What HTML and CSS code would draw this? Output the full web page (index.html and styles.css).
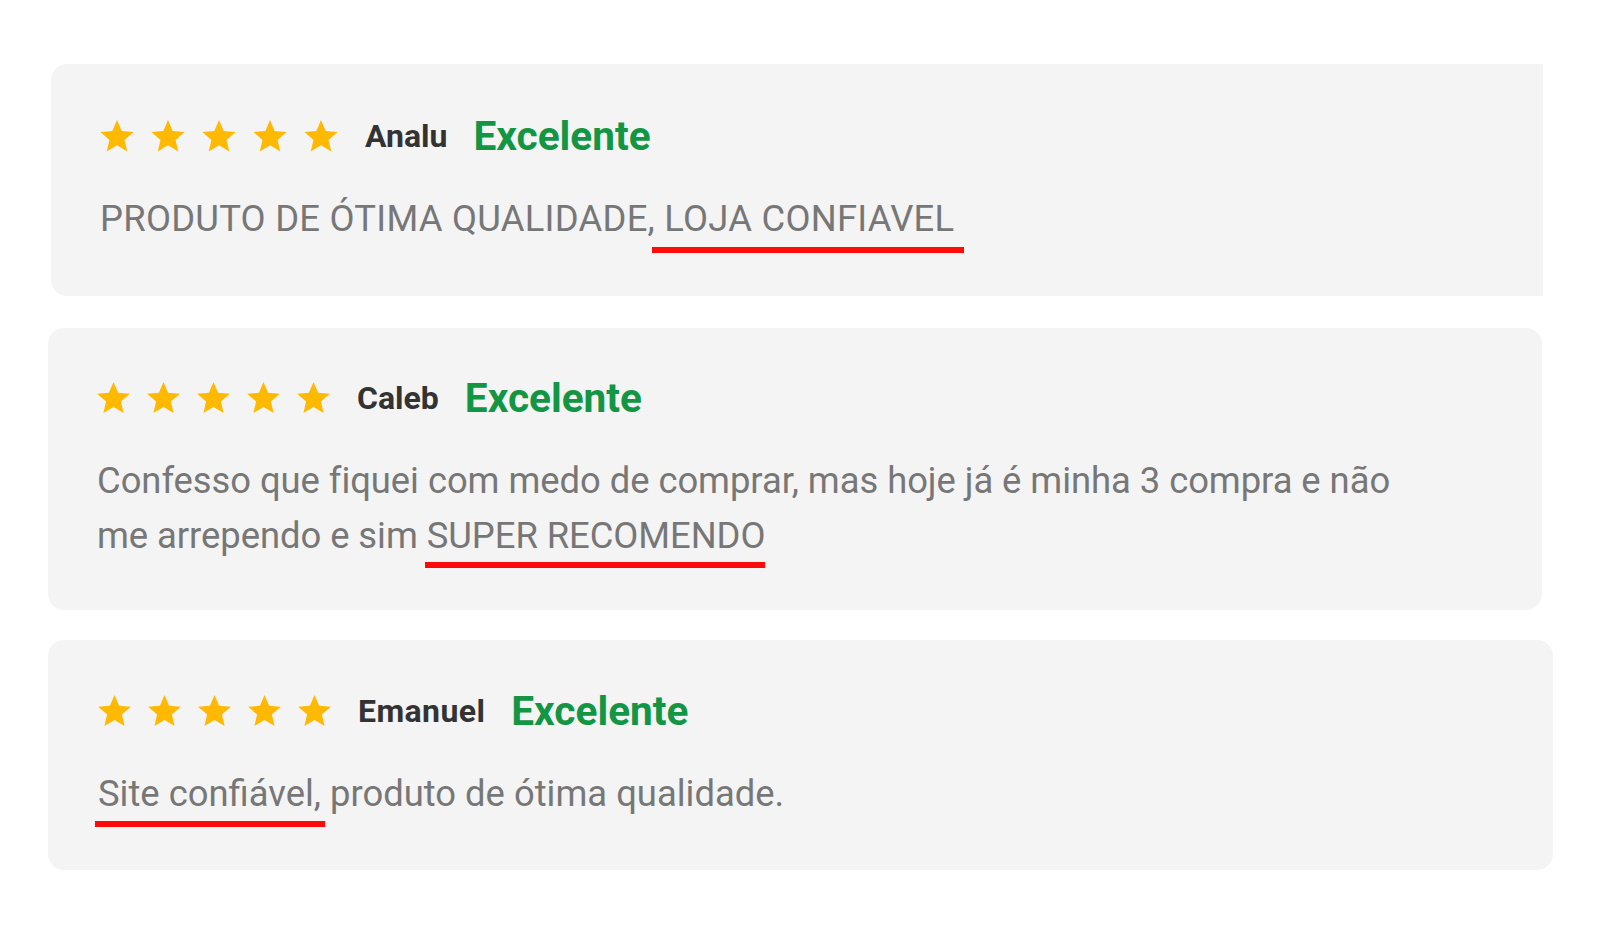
FILE: index.html
```html
<!DOCTYPE html>
<html lang="pt-BR">
<head>
<meta charset="utf-8">
<title>Avaliações</title>
<link rel="stylesheet" href="styles.css">
</head>
<body>
<main class="reviews">
  <article class="card card--one">
    <div class="card-head">
      <div class="stars">
        <svg class="star" viewBox="2 2 20 19.27"><path d="M12 17.27L18.18 21l-1.64-7.03L22 9.24l-7.19-.61L12 2 9.19 8.63 2 9.24l5.46 4.73L5.82 21z"/></svg>
        <svg class="star" viewBox="2 2 20 19.27"><path d="M12 17.27L18.18 21l-1.64-7.03L22 9.24l-7.19-.61L12 2 9.19 8.63 2 9.24l5.46 4.73L5.82 21z"/></svg>
        <svg class="star" viewBox="2 2 20 19.27"><path d="M12 17.27L18.18 21l-1.64-7.03L22 9.24l-7.19-.61L12 2 9.19 8.63 2 9.24l5.46 4.73L5.82 21z"/></svg>
        <svg class="star" viewBox="2 2 20 19.27"><path d="M12 17.27L18.18 21l-1.64-7.03L22 9.24l-7.19-.61L12 2 9.19 8.63 2 9.24l5.46 4.73L5.82 21z"/></svg>
        <svg class="star" viewBox="2 2 20 19.27"><path d="M12 17.27L18.18 21l-1.64-7.03L22 9.24l-7.19-.61L12 2 9.19 8.63 2 9.24l5.46 4.73L5.82 21z"/></svg>
      </div>
      <span class="name">Analu</span>
      <span class="rating">Excelente</span>
    </div>
    <p class="text text--caps">PRODUTO DE ÓTIMA QUALIDADE,<span class="mark mark--one"> LOJA CONFIAVEL</span></p>
  </article>

  <article class="card card--two">
    <div class="card-head">
      <div class="stars stars--sm">
        <svg class="star" viewBox="2 2 20 19.27"><path d="M12 17.27L18.18 21l-1.64-7.03L22 9.24l-7.19-.61L12 2 9.19 8.63 2 9.24l5.46 4.73L5.82 21z"/></svg>
        <svg class="star" viewBox="2 2 20 19.27"><path d="M12 17.27L18.18 21l-1.64-7.03L22 9.24l-7.19-.61L12 2 9.19 8.63 2 9.24l5.46 4.73L5.82 21z"/></svg>
        <svg class="star" viewBox="2 2 20 19.27"><path d="M12 17.27L18.18 21l-1.64-7.03L22 9.24l-7.19-.61L12 2 9.19 8.63 2 9.24l5.46 4.73L5.82 21z"/></svg>
        <svg class="star" viewBox="2 2 20 19.27"><path d="M12 17.27L18.18 21l-1.64-7.03L22 9.24l-7.19-.61L12 2 9.19 8.63 2 9.24l5.46 4.73L5.82 21z"/></svg>
        <svg class="star" viewBox="2 2 20 19.27"><path d="M12 17.27L18.18 21l-1.64-7.03L22 9.24l-7.19-.61L12 2 9.19 8.63 2 9.24l5.46 4.73L5.82 21z"/></svg>
      </div>
      <span class="name">Caleb</span>
      <span class="rating">Excelente</span>
    </div>
    <p class="text text--tight">Confesso que fiquei com medo de comprar, mas hoje já é minha 3 compra e não me arrependo e sim <span class="mark mark--two">SUPER RECOMENDO</span></p>
  </article>

  <article class="card card--three">
    <div class="card-head">
      <div class="stars stars--sm">
        <svg class="star" viewBox="2 2 20 19.27"><path d="M12 17.27L18.18 21l-1.64-7.03L22 9.24l-7.19-.61L12 2 9.19 8.63 2 9.24l5.46 4.73L5.82 21z"/></svg>
        <svg class="star" viewBox="2 2 20 19.27"><path d="M12 17.27L18.18 21l-1.64-7.03L22 9.24l-7.19-.61L12 2 9.19 8.63 2 9.24l5.46 4.73L5.82 21z"/></svg>
        <svg class="star" viewBox="2 2 20 19.27"><path d="M12 17.27L18.18 21l-1.64-7.03L22 9.24l-7.19-.61L12 2 9.19 8.63 2 9.24l5.46 4.73L5.82 21z"/></svg>
        <svg class="star" viewBox="2 2 20 19.27"><path d="M12 17.27L18.18 21l-1.64-7.03L22 9.24l-7.19-.61L12 2 9.19 8.63 2 9.24l5.46 4.73L5.82 21z"/></svg>
        <svg class="star" viewBox="2 2 20 19.27"><path d="M12 17.27L18.18 21l-1.64-7.03L22 9.24l-7.19-.61L12 2 9.19 8.63 2 9.24l5.46 4.73L5.82 21z"/></svg>
      </div>
      <span class="name name--wide">Emanuel</span>
      <span class="rating">Excelente</span>
    </div>
    <p class="text"><span class="mark mark--three">Site confiável,</span> produto de ótima qualidade.</p>
  </article>
</main>
</body>
</html>
```

FILE: styles.css
```css
html, body {
  margin: 0;
  padding: 0;
  background: #ffffff;
}

body {
  font-family: Roboto, "Liberation Sans", Arial, sans-serif;
}

.reviews {
  display: flex;
  flex-direction: column;
  align-items: flex-start;
  padding-top: 64px;
}

.card {
  box-sizing: border-box;
  background: #f4f4f4;
  border-radius: 16px;
  padding: 49px;
}

.card--one {
  margin-left: 51px;
  width: 1492px;
  border-radius: 16px 0 0 16px;
  padding-top: 50px;
  padding-bottom: 50px;
}

.card--two {
  margin-top: 32px;
  margin-left: 48px;
  width: 1494px;
  padding-top: 48px;
  padding-bottom: 47px;
}

.card--three {
  margin-top: 30px;
  margin-left: 48px;
  width: 1505px;
  padding-top: 49px;
  padding-bottom: 49px;
  padding-left: 50px;
}

.card-head {
  display: flex;
  align-items: center;
  height: 44px;
}

.stars {
  display: flex;
  align-items: center;
  gap: 17px;
  margin-right: 27px;
}

.star {
  display: block;
  width: 34px;
  height: 32px;
  fill: #ffb900;
}

.stars--sm .star {
  width: 33px;
  height: 31.5px;
}

.name {
  font-size: 32px;
  font-weight: 700;
  color: #333333;
  margin-right: 26px;
}

.name--wide {
  letter-spacing: 0.4px;
}

.rating {
  font-size: 40.6px;
  font-weight: 700;
  color: #129644;
}

.text {
  margin: 33px 0 0 0;
  max-width: 1330px;
  font-size: 36.4px;
  line-height: 55px;
  color: #777777;
}

.text--caps {
  letter-spacing: 0.25px;
}

.text--tight {
  letter-spacing: -0.05px;
}

.mark {
  position: relative;
}

.mark::after {
  content: "";
  position: absolute;
  bottom: -12px;
  height: 6px;
  background: #ff0a0a;
}

.mark--one::after {
  left: -3px;
  right: -10px;
  bottom: -12.5px;
}

.mark--two::after {
  left: -2px;
  right: 0;
  bottom: -11px;
}

.mark--three::after {
  left: -3px;
  right: -4px;
}
```
